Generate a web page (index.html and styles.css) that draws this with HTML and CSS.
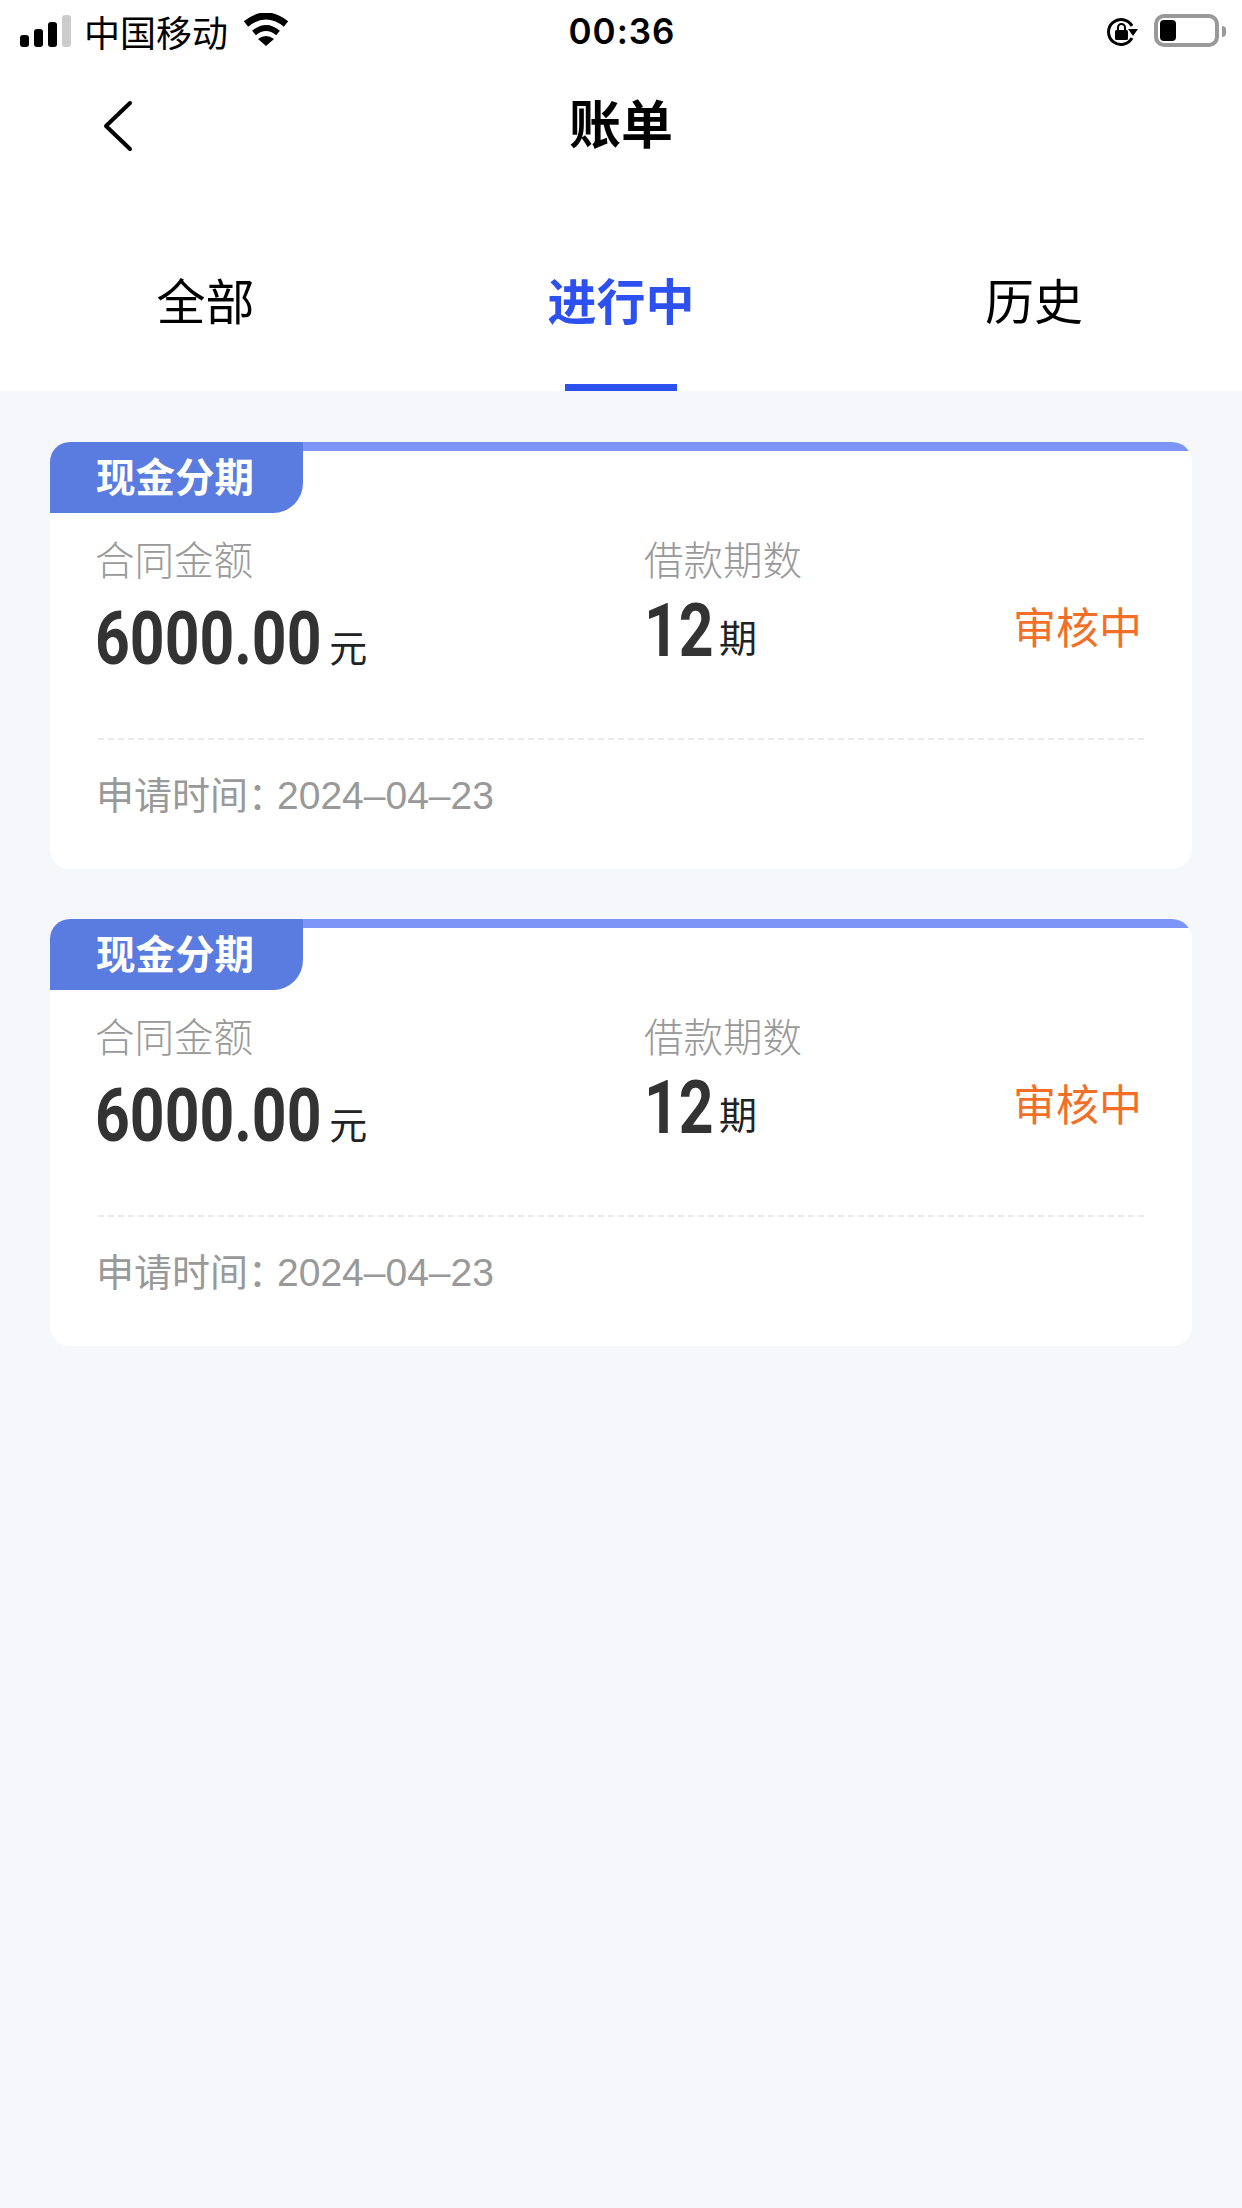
FILE: index.html
```html
<!DOCTYPE html>
<html lang="zh-CN">
  <head>
    <title>账单</title>
    <meta charset="utf-8" />
    <meta name="viewport" content="width=device-width, initial-scale=1.0" />
    <link rel="stylesheet" href="styles.css">
  </head>
  <body>
    <div id="app">
      <header>
        <div class="status-bar">
          <div class="status-left">
            <svg class="signal" width="51" height="32" viewBox="0 0 51 32">
              <rect x="0" y="20" width="9" height="12" rx="3" fill="#000" />
              <rect x="14" y="14" width="9" height="18" rx="3" fill="#000" />
              <rect x="28" y="7" width="9" height="25" rx="3" fill="#000" />
              <rect x="42" y="0" width="9" height="32" rx="3" fill="#ccc" />
            </svg>
            <span class="carrier">中国移动</span>
            <svg class="wifi" width="46" height="33" viewBox="0 0 46 33">
              <path d="M3 11 Q23 -5 43 11" fill="none" stroke="#000" stroke-width="7" />
              <path d="M11 20 Q23 10 35 20" fill="none" stroke="#000" stroke-width="6" />
              <path d="M15 26 Q23 20 31 26 L23 33 Z" fill="#000" />
            </svg>
          </div>
          <div class="clock">00:36</div>
          <div class="status-right">
            <svg class="lock" width="32" height="30" viewBox="0 0 32 30">
              <path d="M26 21 A12.5 12.5 0 1 1 26 9" fill="none" stroke="#000" stroke-width="3" />
              <path d="M22 12 L32 12 L27 19 Z" fill="#000" />
              <rect x="9" y="13" width="13" height="10" rx="1.5" fill="#000" />
              <path d="M12 13 V10.5 a3.5 3.5 0 0 1 7 0 V13" fill="none" stroke="#000" stroke-width="2" />
            </svg>
            <div class="battery"><div class="battery-level"></div></div>
            <div class="battery-nub"></div>
          </div>
        </div>
        <nav class="nav-bar">
          <svg class="back" width="31" height="52" viewBox="0 0 31 52">
            <path d="M28 3 L4 26 L28 49" fill="none" stroke="#000" stroke-width="4" stroke-linecap="round" stroke-linejoin="round" />
          </svg>
          <h1>账单</h1>
        </nav>
        <div class="tabs">
          <div class="tab">全部</div>
          <div class="tab active">进行中</div>
          <div class="tab">历史</div>
        </div>
      </header>
      <main>
        <section class="card">
          <div class="card-head">
            <div class="tag">现金分期</div>
            <div class="strip"></div>
          </div>
          <div class="card-body">
            <div class="col-amount">
              <div class="label">合同金额</div>
              <div class="value"><span class="num amount">6000.00</span><span class="unit">元</span></div>
            </div>
            <div class="col-term">
              <div class="label">借款期数</div>
              <div class="value term"><span class="num count">12</span><span class="unit">期</span></div>
            </div>
            <div class="state">审核中</div>
          </div>
          <div class="card-foot"><span class="foot-label">申请时间：</span><span class="foot-date">2024–04–23</span></div>
        </section>
        <section class="card">
          <div class="card-head">
            <div class="tag">现金分期</div>
            <div class="strip"></div>
          </div>
          <div class="card-body">
            <div class="col-amount">
              <div class="label">合同金额</div>
              <div class="value"><span class="num amount">6000.00</span><span class="unit">元</span></div>
            </div>
            <div class="col-term">
              <div class="label">借款期数</div>
              <div class="value term"><span class="num count">12</span><span class="unit">期</span></div>
            </div>
            <div class="state">审核中</div>
          </div>
          <div class="card-foot"><span class="foot-label">申请时间：</span><span class="foot-date">2024–04–23</span></div>
        </section>
      </main>
    </div>
  </body>
</html>
```
FILE: styles.css
```css
html,
body {
  margin: 0;
  font-family: "Noto Sans CJK SC", "Liberation Sans", sans-serif;
  color: #000;
}

#app {
  min-height: 2208px;
  background-color: #f5f7fb;
}

header {
  background-color: #fff;
}

.status-bar {
  height: 62px;
  display: grid;
  grid-template-columns: 1fr auto 1fr;
  align-items: center;
  padding: 0 16px 0 20px;
}

.status-left {
  display: flex;
  align-items: center;
}

.carrier {
  font-size: 36px;
  line-height: 62px;
  margin-left: 13px;
}

.wifi {
  margin-left: 15px;
  margin-bottom: 4px;
}

.clock {
  margin-left: -2px;
  font-family: "Inter", sans-serif;
  font-weight: 600;
  font-size: 35px;
  letter-spacing: 1px;
}

.status-right {
  display: flex;
  align-items: center;
  justify-content: flex-end;
}

.lock {
  margin-top: 1px;
}

.battery {
  width: 53px;
  height: 21px;
  margin-left: 16px;
  margin-bottom: 2px;
  padding: 2px;
  border: 4px solid #999;
  border-radius: 10px;
}

.battery-level {
  width: 16px;
  height: 21px;
  background-color: #000;
  border-radius: 4px;
}

.battery-nub {
  width: 4px;
  height: 11px;
  margin-left: 3px;
  background-color: #999;
  border-radius: 0 4px 4px 0;
}

.nav-bar {
  height: 126px;
  display: flex;
  align-items: center;
  justify-content: center;
  position: relative;
}

.nav-bar h1 {
  margin: 0 0 6px;
  font-size: 52px;
  line-height: 120px;
  font-weight: 700;
}

.back {
  position: absolute;
  left: 102px;
  top: 38px;
}

.tabs {
  height: 203px;
  display: grid;
  grid-template-columns: 1fr 1fr 1fr;
}

.tab {
  position: relative;
  padding-top: 82px;
  font-size: 49px;
  line-height: 58px;
  text-align: center;
}

.tab:first-child {
  padding-right: 3px;
}

.tab:last-child {
  padding-right: 2px;
}

.tab.active {
  color: #2d50f0;
  font-weight: 700;
}

.tab.active::after {
  content: "";
  position: absolute;
  left: 151px;
  bottom: 0;
  width: 112px;
  height: 7px;
  background-color: #2d50f0;
}

main {
  padding: 51px 50px 0;
}

.card {
  margin-bottom: 50px;
  background-color: #fff;
  border-radius: 20px;
  overflow: hidden;
}

.card-head {
  display: flex;
}

.tag {
  width: 253px;
  height: 71px;
  box-sizing: border-box;
  padding-left: 46px;
  background-color: #5a7be0;
  border-bottom-right-radius: 30px;
  color: #fff;
  font-size: 39.5px;
  font-weight: 700;
  line-height: 66px;
}

.strip {
  flex: 1;
  height: 9px;
  background-color: #7e95f8;
}

.card-body {
  height: 204px;
  display: flex;
  padding: 21px 50px 0 45px;
}

.col-amount {
  width: 549px;
}

.col-term {
  flex: 1;
}

.label {
  margin-top: -1px;
  margin-bottom: 14px;
  font-size: 39.5px;
  font-weight: 300;
  line-height: 50px;
  color: #999;
}

.value {
  height: 84px;
  white-space: nowrap;
  color: #222;
}

.value.term {
  margin-top: -8px;
}

/* no condensed bold font here, so Roboto gets squeezed to the DIN digit width */
.num {
  display: inline-block;
  font-family: "Roboto", sans-serif;
  font-size: 74px;
  font-weight: 700;
  line-height: 84px;
  color: #333;
  transform: scaleX(0.82);
  transform-origin: left center;
}

.num.amount {
  margin-right: -50px;
}

.num.count {
  margin-right: -18px;
}

.unit {
  margin-left: 8px;
  font-size: 38px;
  line-height: 40px;
  vertical-align: 2px;
}

.term .unit {
  vertical-align: 4px;
}

.state {
  margin-top: 61px;
  font-size: 43px;
  line-height: 60px;
  color: #f36f27;
}

.card-foot {
  margin: 0 48px;
  padding: 24px 0 45px;
  border-top: 2px dashed #eaeaea;
  font-size: 39px;
  line-height: 56px;
  color: #999;
}

.foot-label {
  margin-left: -2px;
  font-size: 38px;
}

.foot-date {
  margin-left: -9px;
  font-family: "Liberation Sans", sans-serif;
}
```
